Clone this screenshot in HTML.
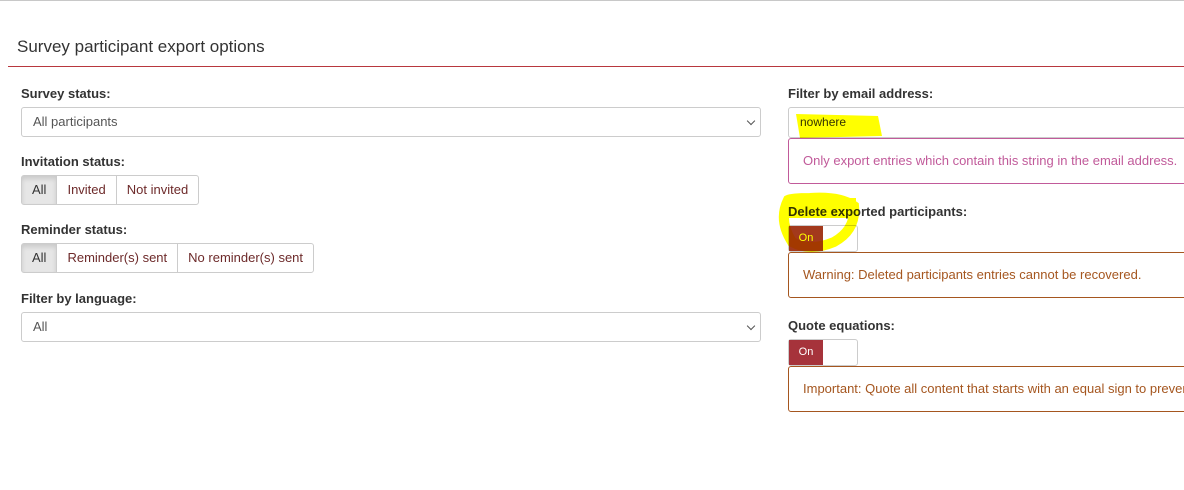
<!DOCTYPE html><html><head><style>
body{margin:0;width:1184px;height:490px;background:#fff;font-family:"Liberation Sans",sans-serif;position:relative;overflow:hidden;color:#333}
.wrap{position:absolute;left:0;top:0;width:1184px;height:490px;overflow:hidden}
.a{position:absolute}
.lbl{font-weight:bold;font-size:13px;color:#333}
.sel{border:1px solid #ccc;border-radius:3px;height:30px;box-sizing:border-box;font-size:13px;color:#555;padding:6px 11px;background:#fff}
.sel:after{content:"";position:absolute;right:6px;top:10px;width:5px;height:5px;border-right:1px solid #555;border-bottom:1px solid #555;transform:rotate(45deg)}
.bg{display:flex;font-size:13px}
.bg div{border:1px solid #ccc;height:30px;box-sizing:border-box;padding:6px 10px;color:#6d2a2a;margin-left:-1px}
.bg div:first-child{background:#e6e6e6;color:#333;border-radius:3px 0 0 3px;box-shadow:inset 0 3px 5px rgba(0,0,0,.12);margin-left:0}
.bg div:last-child{border-radius:0 3px 3px 0}
.tg{border:1px solid #ccc;border-radius:3px;width:70px;height:27px;box-sizing:border-box;background:#fff}
.tg span{display:block;width:34px;height:25px;background:#a6333b;color:#fff;font-size:11px;line-height:25px;text-align:center}
.box{border:1px solid;border-radius:3px;box-sizing:border-box;font-size:13px;padding:14px;white-space:nowrap;overflow:hidden}
.hl{mix-blend-mode:multiply}
</style></head><body><div class="wrap">
<div class="a" style="left:0;top:0;width:1184px;height:1px;background:#c8c8c8"></div>
<div class="a" style="left:17px;top:37px;font-size:17px;color:#333">Survey participant export options</div>
<div class="a" style="left:8px;top:66px;width:1176px;height:1px;background:#b8373e"></div>

<div class="a lbl" style="left:21px;top:86px">Survey status:</div>
<div class="a sel" style="left:21px;top:107px;width:740px">All participants</div>
<div class="a lbl" style="left:21px;top:154px">Invitation status:</div>
<div class="a bg" style="left:21px;top:175px"><div>All</div><div>Invited</div><div>Not invited</div></div>
<div class="a lbl" style="left:21px;top:222px">Reminder status:</div>
<div class="a bg" style="left:21px;top:243px"><div>All</div><div>Reminder(s) sent</div><div>No reminder(s) sent</div></div>
<div class="a lbl" style="left:21px;top:291px">Filter by language:</div>
<div class="a sel" style="left:21px;top:312px;width:740px">All</div>

<div class="a lbl" style="left:788px;top:86px">Filter by email address:</div>
<div class="a" style="left:788px;top:107px;width:400px;height:31px;border:1px solid #ccc;border-radius:3px;box-sizing:border-box"></div>
<div class="a" style="left:800px;top:115px;font-size:12px;color:#333">nowhere</div>
<svg class="a hl" style="left:790px;top:110px" width="100" height="30"><path d="M6 4 L88 6 L92 26 L10 28 Z" fill="#ffff00"/></svg>
<div class="a box" style="left:788px;top:138px;width:410px;height:46px;border-color:#c15a9a;color:#c15a9a">Only export entries which contain this string in the email address.</div>

<div class="a lbl" style="left:788px;top:204px">Delete exported participants:</div>
<div class="a tg" style="left:788px;top:225px"><span style="background:#a3391c;color:#ff0">On</span></div>
<svg class="a hl" style="left:770px;top:190px" width="100" height="70"><path d="M18 10 Q8 30 22 52 Q40 62 64 52 Q86 40 84 16 Q70 6 40 8 Q22 8 18 10 Z" fill="none" stroke="#ffff00" stroke-width="10"/><rect x="14" y="8" width="72" height="20" fill="#ffff00"/></svg>
<div class="a box" style="left:788px;top:252px;width:410px;height:46px;border-color:#a5561f;color:#a5561f">Warning: Deleted participants entries cannot be recovered.</div>

<div class="a lbl" style="left:788px;top:318px">Quote equations:</div>
<div class="a tg" style="left:788px;top:339px"><span>On</span></div>
<div class="a box" style="left:788px;top:366px;width:410px;height:46px;border-color:#a5561f;color:#a5561f">Important: Quote all content that starts with an equal sign to prevent CSV injections.</div>
</div></body></html>
